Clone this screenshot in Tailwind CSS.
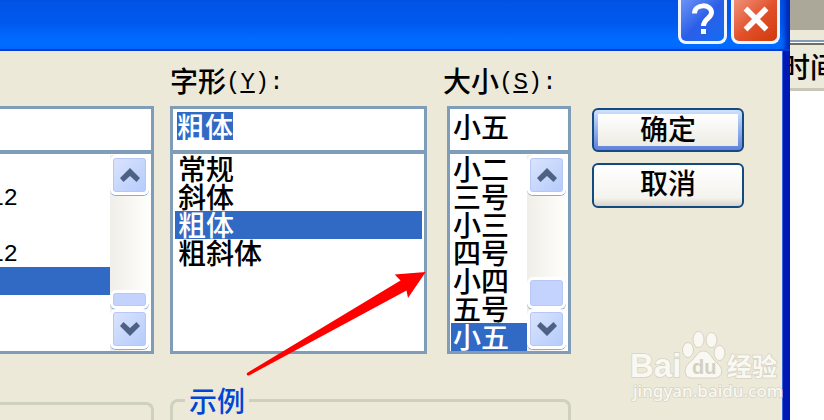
<!DOCTYPE html>
<html lang="zh-CN">
<head>
<meta charset="utf-8">
<title>字体</title>
<script src="https://cdn.jsdelivr.net/npm/@tailwindcss/browser@4"></script>
</head>
<body class="relative flex h-screen overflow-hidden bg-white font-['Noto_Sans_CJK_SC',sans-serif] text-[28px] leading-[26px] font-medium text-black">

<svg width="0" height="0" class="absolute" aria-hidden="true">
  <defs>
    <symbol id="up" viewBox="0 0 22 14"><path d="M1 10 11 0 21 10 17.500 14 11 8 4.500 14Z" fill="#4d6185"/></symbol>
    <symbol id="down" viewBox="0 0 22 14"><path d="M1 4 4.500 0 11 6 17.500 0 21 4 11 14Z" fill="#4d6185"/></symbol>
  </defs>
</svg>

<!-- Font dialog -->
<main class="z-10 flex min-w-0 flex-1 flex-col bg-[#ece9d8]">
  <header class="flex h-[51px] shrink-0 items-start justify-end gap-1 border-b-2 border-[#003dd0] bg-linear-to-b from-[#0054e6] via-[#0058ee] via-45% to-[#006bff] to-80% pr-[10px] shadow-[inset_-8px_0_5px_-3px_#0028b8]">
    <button aria-label="帮助" class="flex h-11 w-[49px] items-center justify-center rounded-b-lg border-3 border-t-0 border-[#f0f4ff] bg-linear-to-br from-[#6c93f5] via-[#2b5ee8] to-[#0a6cf2] pb-1">
      <svg viewBox="0 0 24 32" class="h-8 w-6"><path d="M3.500 10.500C3.500 0.500 20.500 0.500 20.500 9.500C20.500 15 12.500 16 12.500 23" fill="none" stroke="#fff" stroke-width="5"/><rect x="10" y="26" width="5" height="5" fill="#fff"/></svg>
    </button>
    <button aria-label="关闭" class="flex h-11 w-[49px] items-center justify-center rounded-b-lg border-3 border-t-0 border-[#f0f4ff] bg-linear-to-br from-[#ee9078] via-[#e2512a] to-[#d03a06] pb-1">
      <svg viewBox="0 0 26 26" class="h-[26px] w-[26px]"><path d="M2.500 2.500 23.500 23.500M23.500 2.500 2.500 23.500" stroke="#fff" stroke-width="5.500"/></svg>
    </button>
  </header>

  <div class="flex min-h-0 flex-1 flex-col border-r-7 border-[#0018b4] shadow-[inset_-1px_0_#3563dc]">
    <div class="flex pr-[39px]">
      <section class="w-[154px] pt-[55px]" aria-label="字体">
        <input aria-label="字体名称" class="block h-[47px] w-full border-3 border-l-0 border-[#7f9db9] bg-white outline-none">
        <div class="-mt-[2px] flex h-[203px] justify-between border-3 border-l-0 border-[#7f9db9] bg-white pt-px pr-0.5">
          <ul role="listbox" aria-label="字体列表" class="flex-1 font-['Liberation_Mono',monospace] text-2xl leading-8 font-normal">
            <li role="option" class="h-7"></li>
            <li role="option" class="flex h-7 w-[18px] justify-end overflow-hidden">12</li>
            <li role="option" class="h-7"></li>
            <li role="option" class="flex h-7 w-[18px] justify-end overflow-hidden">12</li>
            <li role="option" aria-selected="true" class="h-7 bg-[#316ac5]"></li>
          </ul>
          <div class="flex w-[39px] flex-col justify-between bg-linear-to-r from-[#f0eee8] to-[#fefefb] pb-0.5">
            <button aria-label="向上" class="flex h-10 items-center justify-center rounded-md border-3 border-white bg-linear-to-br from-[#dbe4fd] to-[#b4cbfb] shadow-[inset_0_0_0_1px_#b8c8f4,0_1px_#8aabd8]"><svg class="h-[14px] w-[22px]"><use href="#up"/></svg></button>
            <div>
              <div class="h-[19px] rounded-md border-3 border-white bg-[#c3d3fd] shadow-[inset_0_0_0_1px_#b8c8f4,0_1px_#8aabd8]"></div>
              <button aria-label="向下" class="flex h-10 w-full items-center justify-center rounded-md border-3 border-white bg-linear-to-br from-[#dbe4fd] to-[#b4cbfb] shadow-[inset_0_0_0_1px_#b8c8f4,0_1px_#8aabd8]"><svg class="h-[14px] w-[22px]"><use href="#down"/></svg></button>
            </div>
          </div>
        </div>
      </section>

      <section class="ml-4 min-w-0 flex-1 pt-4">
        <label for="style" class="flex h-[39px]">字形<span class="font-['Liberation_Mono',monospace] text-2xl leading-8 font-normal">(<span class="underline underline-offset-2">Y</span>):</span></label>
        <div class="h-[47px] border-3 border-[#7f9db9] bg-white pt-[3px] pl-1">
          <input id="style" value="粗体" class="block h-7 w-full leading-7 outline-none selection:bg-[#316ac5] selection:text-white">
        </div>
        <div class="-mt-[2px] h-[203px] border-3 border-[#7f9db9] bg-white px-0.5 pt-px">
          <ul role="listbox" aria-label="字形">
            <li role="option" class="h-7 pl-[3px]">常规</li>
            <li role="option" class="h-7 pl-[3px]">斜体</li>
            <li role="option" aria-selected="true" class="h-7 bg-[#316ac5] pl-[3px] text-white">粗体</li>
            <li role="option" class="h-7 pl-[3px]">粗斜体</li>
          </ul>
        </div>
      </section>

      <section class="ml-5 w-[124px] pt-4">
        <label for="size" class="-ml-1 flex h-[39px]">大小<span class="font-['Liberation_Mono',monospace] text-2xl leading-8 font-normal">(<span class="underline underline-offset-2">S</span>):</span></label>
        <div class="h-[47px] border-3 border-[#7f9db9] bg-white pt-[3px] pl-[3px]">
          <input id="size" value="小五" class="block h-7 w-full leading-7 outline-none">
        </div>
        <div class="-mt-[2px] flex h-[203px] border-3 border-[#7f9db9] bg-white pt-px pr-0.5 pl-px">
          <ul role="listbox" aria-label="大小" class="flex-1">
            <li role="option" class="h-7 pl-0.5">小二</li>
            <li role="option" class="h-7 pl-0.5">三号</li>
            <li role="option" class="h-7 pl-0.5">小三</li>
            <li role="option" class="h-7 pl-0.5">四号</li>
            <li role="option" class="h-7 pl-0.5">小四</li>
            <li role="option" class="h-7 pl-0.5">五号</li>
            <li role="option" aria-selected="true" class="h-7 bg-[#316ac5] pl-0.5 text-white">小五</li>
          </ul>
          <div class="flex w-[39px] flex-col justify-between bg-linear-to-r from-[#f0eee8] to-[#fefefb] pb-0.5">
            <button aria-label="向上" class="flex h-10 items-center justify-center rounded-md border-3 border-white bg-linear-to-br from-[#dbe4fd] to-[#b4cbfb] shadow-[inset_0_0_0_1px_#b8c8f4,0_1px_#8aabd8]"><svg class="h-[14px] w-[22px]"><use href="#up"/></svg></button>
            <div>
              <div class="h-8 rounded-md border-3 border-white bg-[#c3d3fd] shadow-[inset_0_0_0_1px_#b8c8f4,0_1px_#8aabd8]"></div>
              <button aria-label="向下" class="flex h-10 w-full items-center justify-center rounded-md border-3 border-white bg-linear-to-br from-[#dbe4fd] to-[#b4cbfb] shadow-[inset_0_0_0_1px_#b8c8f4,0_1px_#8aabd8]"><svg class="h-[14px] w-[22px]"><use href="#down"/></svg></button>
            </div>
          </div>
        </div>
      </section>

      <div class="ml-[21px] flex w-[152px] flex-col gap-[11px] pt-[57px]">
        <button class="h-11 rounded-md border-2 border-[#134a80] bg-linear-to-b from-[#cee2fd] to-[#6080dc] p-1"><span class="flex h-full items-center justify-center bg-linear-to-b from-white to-[#ecebe4] pb-1">确定</span></button>
        <button class="flex h-[45px] items-center justify-center rounded-md border-2 border-[#134a80] bg-linear-to-b from-white via-[#f4f3ee] via-80% to-[#d8d3c8] pb-2">取消</button>
      </div>
    </div>

    <div class="mt-8 flex h-20 pr-[212px]">
      <fieldset class="mt-4 w-[154px] rounded-tr-lg border-3 border-b-0 border-l-0 border-[#d0d0bf]"></fieldset>
      <fieldset class="ml-4 min-w-0 flex-1 rounded-t-lg border-3 border-b-0 border-[#d0d0bf] pl-3">
        <legend class="px-1 leading-7 text-[#0046d5]">示例</legend>
      </fieldset>
    </div>
  </div>
</main>

<!-- Window behind the dialog -->
<aside class="flex w-[34px] flex-col">
  <div class="h-[30px] bg-[#aca899]"></div>
  <div class="h-[10px] bg-[#ece9d8]"></div>
  <div class="h-[5px] border-t-2 border-b-2 border-t-[#7f9db9] border-b-[#716f64] bg-white"></div>
  <div class="h-[46px] overflow-hidden border-b-3 border-[#cbc7b8] bg-[#ebeadb] pt-2"><span class="-ml-2 block w-14">时间</span></div>
</aside>

<!-- Pointer arrow -->
<svg class="absolute top-[268px] left-[240px] z-20" width="190" height="112" viewBox="240 268 190 112" aria-hidden="true"><path d="M425.700 272 394.700 274.500 400.500 280.500 247 373Q246 376 249 375.500L406.500 290.500 408 298Z" fill="#f00"/></svg>

<!-- Watermark -->
<svg class="absolute top-[325px] left-[625px] z-20" width="160" height="85" viewBox="625 325 160 85" role="img" aria-label="Baidu 经验">
  <g fill="#f9f8f2" stroke="#d6d3c4" stroke-width="1">
    <ellipse cx="688" cy="350" rx="5.500" ry="7.500"/>
    <ellipse cx="698.500" cy="339.500" rx="5.500" ry="8"/>
    <ellipse cx="711.500" cy="340" rx="5.500" ry="7.500"/>
    <ellipse cx="719.500" cy="353" rx="5.500" ry="7.500"/>
    <path d="M703.500 351C710 351 711 358 717 363C725 370 722 378 714 378H692C684 378 683 369 689 363C696 358 697 351 703.500 351Z"/>
  </g>
  <g fill="#f9f8f2" stroke="#d6d3c4" stroke-width="1.500" paint-order="stroke">
    <text x="630" y="377" font-size="33" font-weight="bold" font-family="Liberation Sans, sans-serif">Bai</text>
    <text x="727" y="376" font-size="25" font-weight="bold" font-family="Noto Sans CJK SC, sans-serif">经验</text>
    <text x="633" y="397" font-size="17" font-weight="500" font-family="Noto Sans, sans-serif">jingyan.baidu.com</text>
  </g>
  <text x="692" y="374" font-size="20" font-weight="bold" fill="#d3d0c0" font-family="Liberation Sans, sans-serif">du</text>
</svg>

<script>
  const styleInput = document.getElementById('style');
  styleInput.focus();
  styleInput.select();
</script>
</body>
</html>
